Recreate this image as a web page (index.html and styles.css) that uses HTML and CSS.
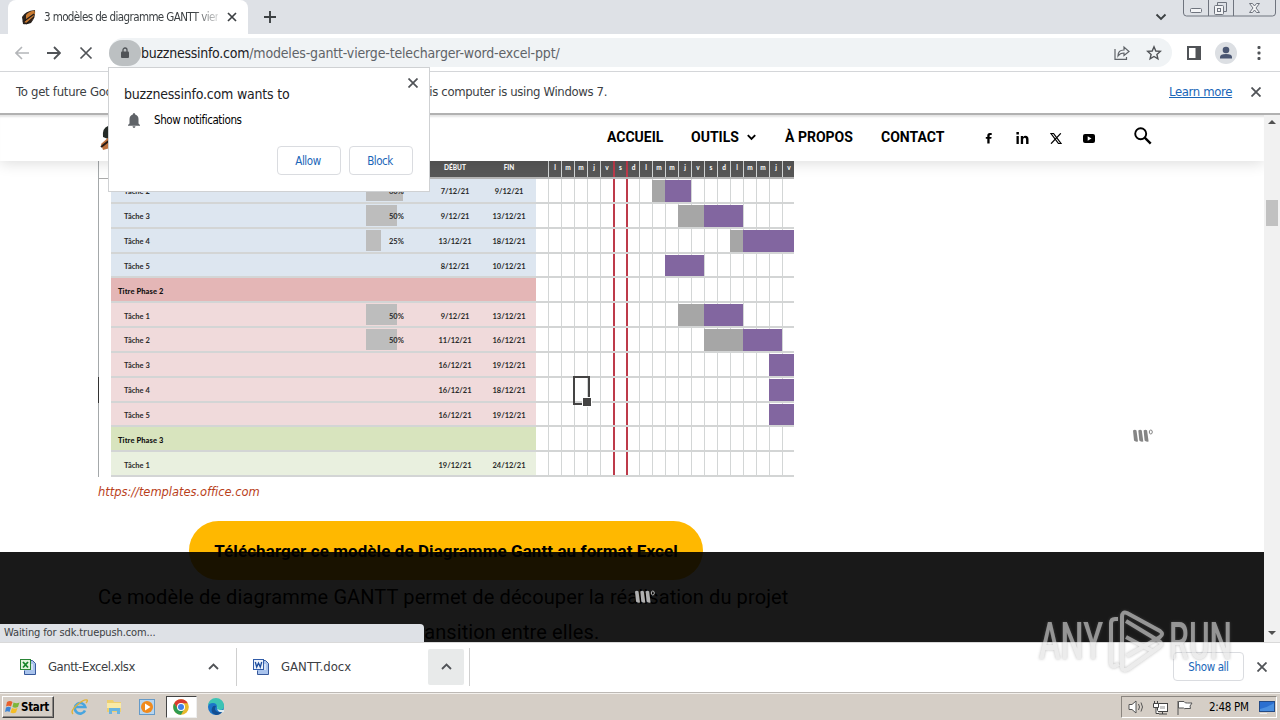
FILE: index.html
```html
<!DOCTYPE html>
<html lang="fr">
<head>
<meta charset="utf-8">
<title>3 modèles de diagramme GANTT vierge</title>
<link rel="stylesheet" href="styles.css">
</head>
<body>
<div class="desktop">
  <div class="tabstrip">
    <div class="tab">
      <svg class="favicon" width="16" height="16" viewBox="0 0 16 16"><path d="M1 8Q4 2 14 1q1 7-4 13-5 2-8 1z" fill="#29221d"/><path d="M5 6Q8 2 13.500 1.500L14 5l-9 7zM3 13l10-7-1 4-6 4z" fill="#c97b32"/><path d="M2 13L13 5M5 15l8-7" stroke="#221b18" stroke-width="1.2"/></svg>
      <span class="tab-title">3 modèles de diagramme GANTT vier</span>
      <svg width="10" height="10" viewBox="0 0 10 10"><path d="M1 1l8 8M9 1L1 9" stroke="#3c4043" stroke-width="1.7"/></svg>
    </div>
    <svg class="newtab" width="12" height="12" viewBox="0 0 12 12"><path d="M6 0v12M0 6h12" stroke="#3c4043" stroke-width="1.9"/></svg>
    <svg class="tabsearch" width="12" height="12" viewBox="0 0 12 12"><path d="M1.500 3.500L6 8l4.500-4.500" fill="none" stroke="#3c4043" stroke-width="1.9"/></svg>
    <div class="winctl">
      <svg width="93" height="17" viewBox="0 0 93 17" fill="none" stroke="#6f747e"><path d="M.5 0v13q0 3 3 3h86q3 0 3-3V0M25.500 0v16M50.500 0v16"/><rect x="7.500" y="8.500" width="11" height="4" rx="1" fill="#f3f4f6"/><path d="M34.500 5V2.500h9v9H41" fill="none"/><rect x="31.500" y="5.500" width="9" height="9" rx="1" fill="#f3f4f6"/><rect x="34.500" y="8.500" width="3" height="3"/><path d="M66.500 3.500h3l2 2.500 2-2.500h3L73 8l3.500 4.500h-3l-2-2.500-2 2.500h-3L70 8z" fill="#f3f4f6"/></svg>
    </div>
  </div>

  <div class="toolbar">
    <svg class="nav" width="14" height="14" viewBox="0 0 14 14"><path d="M14 7H1M7 1L1 7l6 6" fill="none" stroke="#b4b6b9" stroke-width="1.6"/></svg>
    <svg class="nav" width="14" height="14" viewBox="0 0 14 14"><path d="M0 7h13M7 1l6 6-6 6" fill="none" stroke="#505357" stroke-width="1.800"/></svg>
    <svg class="nav" width="14" height="14" viewBox="0 0 14 14"><path d="M1.500 1.500l11 11M12.500 1.500l-11 11" stroke="#505357" stroke-width="1.700"/></svg>
    <div class="omnibox">
      <div class="lock"><svg width="10" height="12" viewBox="0 0 10 12"><rect x="1" y="4.500" width="8" height="6.500" rx="1" fill="#505357"/><path d="M3 5V3a2 2 0 0 1 4 0v2" fill="none" stroke="#505357" stroke-width="1.300"/></svg></div>
      <span class="url"><b>buzznessinfo.com</b>/modeles-gantt-vierge-telecharger-word-excel-ppt/</span>
      <svg class="share" width="16" height="16" viewBox="0 0 16 16" fill="none" stroke="#5f6368" stroke-width="1.200"><path d="M1 4v10.300h11.500V12"/><path d="M4 11q0-6 6-6V2l5 4.500-5 4V8Q6 8 4 11z"/></svg>
      <svg class="star" width="16" height="16" viewBox="0 0 16 16"><path d="M8 1.800l1.800 4.200 4.500.4-3.400 3 1 4.400L8 11.500l-3.900 2.300 1-4.400-3.400-3 4.500-.4z" fill="none" stroke="#505357" stroke-width="1.400"/></svg>
    </div>
    <svg class="panel" width="14" height="14" viewBox="0 0 14 14"><rect x="1" y="1" width="12" height="12" fill="none" stroke="#505357" stroke-width="2"/><path d="M8.500 1h5v12h-5z" fill="#505357"/></svg>
    <svg class="avatar" width="22" height="22" viewBox="0 0 22 22"><circle cx="11" cy="11" r="11" fill="#dcdfe3"/><circle cx="11" cy="8" r="3.300" fill="#4a5672"/><path d="M5 16.500v-1.500q0-3 6-3t6 3v1.500z" fill="#4a5672"/></svg>
    <svg class="dots" width="4" height="14" viewBox="0 0 4 14" fill="#505357"><rect x=".5" y="0" width="3" height="3" rx="1"/><rect x=".5" y="5.500" width="3" height="3" rx="1"/><rect x=".5" y="11" width="3" height="3" rx="1"/></svg>
  </div>

  <div class="infobar">
    <span class="info-text">To get future Google Chrome updates, you'll need Windows 10 or later. Th<span class="info-tail">is computer is using Windows 7.</span></span>
    <a class="learn">Learn more</a>
    <svg width="10" height="10" viewBox="0 0 10 10"><path d="M.5.5l9 9M9.500.5l-9 9" stroke="#505357" stroke-width="1.800"/></svg>
  </div>

  <div class="viewport">
    <div class="page">
      <header class="site-header">
        <svg class="logo" width="16" height="28" viewBox="0 0 16 28"><path d="M10 2q-6 2-5 11l5 2z" fill="#242a27"/><path d="M12 12L3 20l2 6 7-2z" fill="#be713d"/><path d="M12 16l-9 7" stroke="#251914" stroke-width="2"/></svg>
        <nav class="menu">
          <span class="m1">ACCUEIL</span>
          <span class="m2">OUTILS</span>
          <svg class="chev" width="9" height="7" viewBox="0 0 9 7"><path d="M.8 1.200l3.700 3.800 3.700-3.800" fill="none" stroke="#000" stroke-width="1.900"/></svg>
          <span class="m3">À PROPOS</span>
          <span class="m4">CONTACT</span>
        </nav>
        <div class="social">
          <svg width="8" height="12" viewBox="0 0 8 12"><path d="M2.300 11.500V6.800H.8V4.900h1.500V3.500Q2.300 1 4.800 1h1.900v1.900H5.500q-.9 0-.9.9v1.100h2l-.3 1.900H4.600v4.700z"/></svg>
          <svg width="13" height="12" viewBox="0 0 13 12"><path d="M.5 4h2.300v8H.5zM.4 0h2.500v2.500H.4zM4.800 4H7v1.200Q7.800 3.800 9.500 3.800 12.500 3.800 12.500 7.300V12h-2.400V7.800q0-2-1.300-2-1.700 0-1.700 2V12H4.800z"/></svg>
          <svg width="12" height="11" viewBox="0 0 12 11" fill="none" stroke="#000"><path d="M1 .5h2.500L11 10.500H8.500z" stroke-width="1.200"/><path d="M10.800.3L1 10.700" stroke-width="1.200"/></svg>
          <svg width="12" height="9" viewBox="0 0 12 9"><rect width="12" height="9" rx="2"/><path d="M4.700 2.200v4.600l3.800-2.300z" fill="#fff"/></svg>
        </div>
        <svg class="search" width="18" height="18" viewBox="0 0 18 18" fill="none" stroke="#000"><circle cx="6.700" cy="6.700" r="5.500" stroke-width="1.900"/><path d="M10.700 10.700l6 6" stroke-width="2.400"/></svg>
      </header>

      <main class="content">
        <section class="gantt">
          <div class="sheet-edge"></div>
          <div class="rows" id="rows"></div>
          <div class="cursor"></div>
        </section>
        <p class="caption">https://templates.office.com</p>
        <div class="cta-wrap"><a class="cta"><span>Télécharger ce modèle de Diagramme Gantt au format Excel</span></a></div>
        <p class="body-text"><span class="line1">Ce modèle de diagramme GANTT permet de découper la réalisation du projet</span><span class="line2">en plusieurs phases avec la bonne transition entre elles.</span></p>
      </main>

      <svg class="wm side" width="22" height="14" viewBox="0 0 22 14"><path d="M1 1.500q2-1.500 3.500 0l1.500 11q-3 .5-4-1zM6.300 1.500q2-1.500 3.500 0l1.500 11q-3 .5-4-1zM11.600 1.500q2-1.500 3.500 0l1.500 11q-3 .5-4-1z" fill="#858585"/><ellipse cx="18.800" cy="3" rx="1.500" ry="2" fill="none" stroke="#858585"/></svg>
      <div class="ad-overlay">
        <svg class="wm" width="22" height="14" viewBox="0 0 22 14"><path d="M1 1.500q2-1.500 3.500 0l1.500 11q-3 .5-4-1zM6.300 1.500q2-1.500 3.500 0l1.500 11q-3 .5-4-1zM11.600 1.500q2-1.500 3.500 0l1.500 11q-3 .5-4-1z" fill="#b0b0b0"/><ellipse cx="18.800" cy="3" rx="1.500" ry="2" fill="none" stroke="#b0b0b0"/></svg>
      </div>
      <div class="status">Waiting for sdk.truepush.com...</div>
    </div>
    <div class="scrollbar">
      <svg width="8" height="4" viewBox="0 0 8 4"><path d="M0 4l4-4 4 4z" fill="#505050"/></svg>
      <div class="thumb"></div>
      <svg class="down" width="8" height="4" viewBox="0 0 8 4"><path d="M0 0l4 4 4-4z" fill="#505050"/></svg>
    </div>
  </div>

  <div class="downloads">
    <div class="dl first">
      <svg width="16" height="16" viewBox="0 0 16 16"><path d="M7.500 1.500h5l3 3v11h-11v-4" fill="#a9c3ec" stroke="#37599b"/><path d="M9 6h4M9 8h4M9 10h4" stroke="#fff"/><rect x=".5" y=".5" width="10" height="10" fill="#e4f3df" stroke="#2a8536"/><path d="M3 3l5 5.500M8 3L3 8.500" stroke="#16842a" stroke-width="1.800"/></svg>
      <span class="dl-name n1">Gantt-Excel.xlsx</span>
      <span class="dl-more"><svg width="11" height="7" viewBox="0 0 11 7"><path d="M1 6l4.500-4.500L10 6" fill="none" stroke="#505357" stroke-width="1.800"/></svg></span>
    </div>
    <div class="dl">
      <svg width="16" height="16" viewBox="0 0 16 16"><path d="M7.500 1.500h5l3 3v11h-11v-4" fill="#a9c3ec" stroke="#37599b"/><path d="M9 6h4M9 8h4M9 10h4" stroke="#fff"/><rect x=".5" y=".5" width="10" height="10" fill="#edf3fc" stroke="#315ca8"/><path d="M2.300 3l1.400 5 1.800-4 1.800 4L8.700 3" fill="none" stroke="#1d4d9e" stroke-width="1.300"/></svg>
      <span class="dl-name n2">GANTT.docx</span>
      <span class="dl-more active"><svg width="11" height="7" viewBox="0 0 11 7"><path d="M1 6l4.500-4.500L10 6" fill="none" stroke="#505357" stroke-width="1.800"/></svg></span>
    </div>
    <a class="showall">Show all</a>
    <svg class="dl-close" width="10" height="10" viewBox="0 0 10 10"><path d="M.5.5l9 9M9.500.5l-9 9" stroke="#505357" stroke-width="1.800"/></svg>
  </div>

  <div class="taskbar">
    <div class="start">
      <svg width="15" height="14" viewBox="0 0 15 14"><path d="M2 2q3-2 5.500 0L6 6.500q-2.500-1.500-5 0z" fill="#e8602c"/><path d="M8.500 2.500q3 1.500 6 0L13 7q-3 1.500-5.500 0z" fill="#7cb63b"/><path d="M1 7.500q2.500-1.500 5 0L4.500 12q-2-1.500-4.500 0z" fill="#3d84d5"/><path d="M7 8q2.500 1.500 5.500 0L11 12.500q-3 1.500-5.500 0z" fill="#f4bd26"/></svg>
      <span>Start</span>
    </div>
    <div class="quick">
      <svg width="18" height="18" viewBox="0 0 18 18"><path d="M14 12.500A5.300 5.300 0 1 1 14.300 9H5" fill="none" stroke="#48a5df" stroke-width="2.600"/><path d="M2 16Q-1 13 6 7T16 2q1 1-1 3" fill="none" stroke="#e2b335" stroke-width="1.400"/></svg>
      <svg width="18" height="18" viewBox="0 0 18 18"><path d="M2 2h6l1 2h7v10H2z" fill="#edcf70"/><path d="M2 5h14v5H2z" fill="#f9eaa6"/><path d="M4 16v-6h11v6h-3v-3H7v3z" fill="#69b4df"/></svg>
      <svg width="18" height="18" viewBox="0 0 18 18"><rect x="1.500" y="1.500" width="15" height="15" fill="#b7d5ef" stroke="#659ac8"/><circle cx="9" cy="9" r="6" fill="#f08a1d"/><path d="M7 5.500v7l5.500-3.500z" fill="#fff"/></svg>
      <span class="active-app"><svg width="16" height="16" viewBox="0 0 16 16"><circle cx="8" cy="8" r="7.800" fill="#e8b92c"/><path d="M1.200 4.200A7.800 7.800 0 0 1 14.800 4.200H8L4.700 10z" fill="#d93a30"/><path d="M1.200 4.200A7.800 7.800 0 0 0 8 15.800l3.300-6H4.700z" fill="#2f9b50"/><circle cx="8" cy="8" r="4" fill="#fff"/><circle cx="8" cy="8" r="3" fill="#4080e8"/></svg></span>
      <svg width="18" height="18" viewBox="0 0 18 18"><circle cx="9" cy="9" r="8" fill="#1c75c9"/><path d="M1 8A8 8 0 0 1 17 8q0 4-4 4-4 0-3-3 0-4-4-4-4 0-5 3z" fill="#3cc3b4"/><path d="M9 8q-3 4 2 6 3 1 5-1-3 4-7 4-6-2-4-7 1-3 4-2z" fill="#134e91"/><path d="M10.500 8.500q-1 3 2.500 3.500h4v2q-5 1-6.500-2z" fill="#dceaf0"/></svg>
    </div>
    <div class="tray">
      <svg width="17" height="14" viewBox="0 0 17 14" fill="#fff" stroke="#555"><path d="M1 4.500h3L8 1v12L4 9.500H1z"/><path d="M10.500 4q2 3 0 6M13 2.500q3 4.500 0 9" fill="none"/></svg>
      <svg width="17" height="15" viewBox="0 0 17 15" fill="#fff" stroke="#444"><rect x="5.500" y="3.500" width="10" height="8"/><rect x="8" y="6" width="5" height="3" fill="#c8c8c8" stroke="none"/><path d="M7 14h8M10.500 12v2" /><path d="M1.500 3.500h5v4h-5zM2.500 1v2.500M5.500 1v2.500M4 8v5.500h3"/></svg>
      <svg width="17" height="15" viewBox="0 0 17 15" fill="#fff" stroke="#555"><path d="M2 1v14"/><path d="M2.500 1.500H8q1 2 3.500 1.500H16l-2 3 .5 2.500H10Q8 9 7.500 8h-5z"/></svg>
      <span class="clock">2:48 PM</span>
      <svg width="16" height="13" viewBox="0 0 16 13"><rect x=".5" y=".5" width="15" height="10" fill="#2a6fd0" stroke="#234a85"/><path d="M1 8Q8 7 15 2v8H1z" fill="#4a8fe0"/><path d="M1 12.500h7" stroke="#eee"/></svg>
    </div>
  </div>

  <div class="prompt">
    <svg class="prompt-x" width="10" height="10" viewBox="0 0 10 10"><path d="M.5.5l9 9M9.500.5l-9 9" stroke="#505357" stroke-width="1.700"/></svg>
    <div class="prompt-title">buzznessinfo.com wants to</div>
    <div class="prompt-row">
      <svg width="14" height="15" viewBox="0 0 14 15"><path d="M7 0q1.200 0 1.200 1.500Q11.500 2.500 11.500 6v4.500L13 12v.8H1V12l1.500-1.500V6q0-3.500 3.300-4.500Q5.800 0 7 0zM5.500 13.300h3Q8.300 15 7 15t-1.500-1.700z" fill="#5f6368"/></svg>
      <span>Show notifications</span>
    </div>
    <div class="prompt-btns"><a>Allow</a><a>Block</a></div>
  </div>

  <svg class="anyrun" width="206" height="74" viewBox="0 0 206 74">
    <g class="anyrun-mark">
      <text x="5" y="55" textLength="64" lengthAdjust="spacingAndGlyphs">ANY</text>
      <text x="135" y="55" textLength="63" lengthAdjust="spacingAndGlyphs">RUN</text>
      <path d="M84 15h-3q-4 0-4 4v40q0 4 4 3l4-2M88 62V13q0-6 5-4l33 18q4 3 0 6L93 52M92 17l33 20q5 3 0 6L94 65q-6 3-6-3M92 33l28 15"/>
    </g>
  </svg>
</div>
<script src="gantt.js"></script>
</body>
</html>
```
FILE: styles.css
```css
* { box-sizing: border-box; }
body { margin: 0; background: #fff; font-family: "DejaVu Sans Condensed", "DejaVu Sans", sans-serif; font-size: 12px; color: #202124; }
svg { display: block; flex: none; }
p { margin: 0; }
.desktop { position: relative; width: 1280px; height: 720px; overflow: hidden; display: flex; flex-direction: column; white-space: nowrap; }

.tabstrip { height: 34px; background: #dee1e6; display: flex; align-items: center; padding-left: 8px; flex: none; }
.tab { width: 240px; height: 34px; background: #fff; border-radius: 8px 8px 0 0; display: flex; align-items: center; padding: 0 11px 0 13px; }
.favicon { margin-right: 7px; }
.tab-title { width: 174px; margin-right: 9px; font-size: 11.500px; letter-spacing: -.6px; color: #3c4043; -webkit-mask-image: linear-gradient(90deg, #000 150px, transparent 180px); }
.newtab { margin-left: 16px; }
.tabsearch { margin-left: auto; margin-right: 16px; }
.winctl { align-self: flex-start; margin-right: 4px; }

.toolbar { height: 38px; background: #fff; border-bottom: 1px solid #d4d6d9; display: flex; align-items: center; padding-left: 15px; flex: none; }
.nav { margin-right: 18px; }
.omnibox { width: 1063px; height: 29px; margin-left: -2px; border-radius: 15px; background: #f0f3f5; display: flex; align-items: center; }
.lock { width: 32px; height: 26px; border-radius: 13px; background: #bcc0c2; display: flex; align-items: center; justify-content: center; }
.url { font-size: 14px; letter-spacing: -.16px; color: #5f6368; }
.url b { font-weight: 400; color: #202124; letter-spacing: -.26px; }
.share { margin-left: auto; margin-right: 16px; }
.star { margin-right: 10px; }
.panel { margin-left: 15px; }
.avatar { margin-left: 14px; }
.dots { margin-left: 20px; }

.infobar { height: 43px; background: #fff; border-bottom: 2px solid #b1b1b1; display: flex; align-items: center; padding: 0 19px 2px 16px; font-size: 13px; color: #3c4043; flex: none; }
.info-text { width: 1153px; letter-spacing: -.27px; }
.info-tail { letter-spacing: -.35px; }
.learn { color: #1a66b8; text-decoration: underline; margin-right: auto; letter-spacing: -.35px; }

.viewport { height: 527px; display: flex; flex: none; }
.page { position: relative; width: 1264px; height: 527px; overflow: hidden; background: #fff; }
.site-header { position: relative; z-index: 1; height: 46px; background: #fff; display: flex; align-items: center; padding-left: 98px; box-shadow: 0 2px 14px rgba(0,0,0,.14), inset 0 3px 2px -1px #e4e4e4; }
.logo { margin-right: 493px; }
.menu { display: flex; align-items: center; font: 700 14px Roboto, sans-serif; color: #000; padding-bottom: 2px; }
.m1 { width: 84px; }
.m2 { width: 56px; }
.m3 { width: 96px; margin-left: 29px; }
.m4 { width: 104px; }
.social { display: flex; align-items: center; gap: 22px; width: 147px; }
.social svg:first-child { margin-right: 1px; }
.social svg:nth-child(3) { margin-left: -1px; margin-right: -1px; }
.search { margin-top: -4px; margin-left: 2px; }

.content { padding-left: 98px; }
.gantt { position: relative; width: 696px; height: 316px; display: flex; font: 700 7.500px Lato, "Open Sans", sans-serif; color: #2a2a2a; }
.sheet-edge { width: 13px; border-left: 1px solid #a4a8aa; background: linear-gradient(#aaa, #aaa) 0 17px / 13px 1px no-repeat; position: relative; }
.sheet-edge::before { content: ""; position: absolute; left: -1px; top: 216px; width: 1px; height: 26px; background: #333; }
.rows { width: 683px; }
.g-row { display: grid; grid-template-columns: 255px 62px 54px 54px 12px 246px; height: 24.850px; border-bottom: 2px solid #d3d5d5; align-items: stretch; }
.g-row > * { display: flex; align-items: center; background: var(--tone); }
.g-row > .name, .g-row > .date { padding-top: 3px; }
.g-row > .gap, .g-row > .days { background: none; }
.g-row.head { height: 18px; background: #575757; color: #fff; border-bottom-color: #b5b5b5; font-size: 6.500px; font-weight: 900; }
.g-row.head > .date { padding: 0 0 3px; }
.g-row.head i { padding-bottom: 4px; }
.blue { --tone: #dde6f0; }
.rose { --tone: #f0dadb; }
.red { --tone: #e4b6b6; font-weight: 900; color: #111; }
.green { --tone: #d8e4be; font-weight: 900; color: #111; }
.mint { --tone: #e9f0df; }
.g-row .name { padding-left: 13px; }
.g-row.red .name, .g-row.green .name { padding-left: 7px; letter-spacing: .1px; }
.g-row .pct { display: grid; justify-items: start; }
.pct i { grid-area: 1 / 1; align-self: stretch; margin: 1px 0; background: #bdbdbd; }
.pct span { grid-area: 1 / 1; margin-left: 23px; padding-top: 3px; }
.g-row .date { justify-content: center; }
.g-row .days { display: grid; grid-template-columns: repeat(19, 13px); align-items: stretch; overflow: hidden; }
.days i { grid-row: 1; border-left: 1px solid #d3d6d6; display: flex; justify-content: center; align-items: center; font-style: normal; }
.days i.wk { border-left: 2px solid #bd3a4a; }
.days u { grid-row: 1; z-index: 1; margin: 1px 0 0; }
.days .done { background: #a6a6a6; }
.days .todo { background: #8266a0; }
.cursor { position: absolute; left: 475px; top: 215px; width: 17px; height: 29px; border: 2px solid #444; }
.cursor::after { content: ""; position: absolute; right: -4px; bottom: -4px; width: 8px; height: 8px; background: #444; border: 1px solid #fff; }

.caption { height: 30px; font: italic 11.500px/30px "DejaVu Sans", sans-serif; letter-spacing: -.04px; color: #b93f1b; }
.cta-wrap { width: 696px; height: 73px; padding-top: 14px; display: flex; justify-content: center; }
.cta { width: 514px; height: 59px; border-radius: 30px; background: #ffb800; display: flex; align-items: center; justify-content: center; font: 700 17px Roboto, sans-serif; letter-spacing: .08px; color: #000; }
.body-text { font: 400 20px/35px Roboto, sans-serif; letter-spacing: .11px; color: #000; }
.body-text span { display: block; }
.line2 { width: max-content; }
.side { position: absolute; left: 1132px; top: 314px; }
.ad-overlay { position: absolute; left: 0; right: 0; bottom: 0; height: 90px; background: rgba(0,0,0,.9); display: flex; align-items: center; justify-content: center; padding-left: 26px; }
.status { position: absolute; left: 0; bottom: 0; width: 424px; height: 18px; line-height: 18px; padding-left: 4px; background: #dee1e6; border-top-right-radius: 4px; font-size: 11px; letter-spacing: -.12px; color: #3c4043; }
.scrollbar { width: 16px; background: #f1f1f1; display: flex; flex-direction: column; align-items: center; padding: 5px 0 7px; }
.thumb { width: 12px; height: 26px; margin-top: 76px; background: #c1c1c1; }
.down { margin-top: auto; }

.downloads { height: 50px; border-top: 1px solid #d9d9d9; background: #fff; display: flex; align-items: center; padding: 0 13px 2px 0; flex: none; }
.dl { width: 233px; height: 38px; display: flex; align-items: center; padding-left: 16px; border-right: 1px solid #cfcfcf; font-size: 13px; color: #3c4043; }
.dl.first { width: 237px; padding-left: 20px; }
.dl-name { margin-left: 12px; letter-spacing: -.5px; }
.n2 { letter-spacing: .03px; }
.dl-more { width: 36px; height: 36px; margin-left: auto; margin-right: 5px; display: flex; align-items: center; justify-content: center; border-radius: 2px; }
.dl-more.active { background: #e8eaea; }
.showall { width: 71px; height: 29px; margin-left: auto; margin-right: 13px; border: 1px solid #dadce0; border-radius: 4px; color: #1a66b8; display: flex; align-items: center; justify-content: center; font-size: 11.500px; letter-spacing: -.38px; }

.taskbar { height: 28px; background: #d5cec6; border-top: 1px solid #bdb9b5; box-shadow: inset 0 1px #f3f0ec; display: flex; align-items: center; padding: 1px 3px 0 2px; flex: none; }
.start { width: 52px; height: 22px; border: 1px solid; border-color: #fff #444 #444 #fff; box-shadow: inset -1px -1px #8b8783; display: flex; align-items: center; gap: 1px; padding-left: 2px; font-size: 11.500px; font-weight: 700; color: #000; letter-spacing: -.3px; }
.quick { display: flex; align-items: center; margin-left: 17px; gap: 15.500px; }
.active-app { width: 31px; height: 22px; background: #fff; border: 1px solid; border-color: #444 #eee #eee #444; display: flex; align-items: center; justify-content: center; margin: 0 -5px 0 -6px; }
.tray { margin-left: auto; width: 156px; height: 22px; border: 1px solid; border-color: #8a857f #fff #fff #8a857f; display: flex; align-items: center; padding-left: 6px; gap: 7px; }
.clock { font-size: 11.500px; color: #000; letter-spacing: -.3px; margin: 0 3px 0 9px; }

.prompt { position: absolute; left: 108px; top: 67px; width: 322px; height: 125px; z-index: 5; background: #fff; border: 1px solid #cfd1d3; padding: 17px 16px 16px 15px; }
.prompt-x { position: absolute; left: 299px; top: 10px; }
.prompt-title { font-size: 14px; line-height: 18px; letter-spacing: -.2px; }
.prompt-row { display: flex; align-items: center; gap: 13px; height: 34px; padding-left: 3px; font-size: 11.500px; color: #000; letter-spacing: -.4px; }
.prompt-btns { display: flex; justify-content: flex-end; gap: 8px; margin-top: 9px; }
.prompt-btns a { width: 64px; height: 29px; border: 1px solid #dadce0; border-radius: 4px; display: flex; align-items: center; justify-content: center; color: #1a66b8; font-size: 11.500px; letter-spacing: -.45px; padding-right: 2px; }

.anyrun { position: absolute; left: 1034px; top: 604px; z-index: 6; pointer-events: none; }
.anyrun-mark { opacity: .62; filter: drop-shadow(0 0 1.500px rgba(110,110,110,.7)); }
.anyrun text { font: 500 51px Roboto, sans-serif; fill: #e2e2e2; }
.anyrun path { fill: none; stroke: #e2e2e2; stroke-width: 4; stroke-linejoin: round; }
```
FILE: gantt.js
```js
// tone, label, percent, start, end, bars as [kind, first column, column count]
const tasks = [
  ["blue", "Tâche 2", 60, "7/12/21", "9/12/21", [["done", 9, 1], ["todo", 10, 2]]],
  ["blue", "Tâche 3", 50, "9/12/21", "13/12/21", [["done", 11, 2], ["todo", 13, 3]]],
  ["blue", "Tâche 4", 25, "13/12/21", "18/12/21", [["done", 15, 1], ["todo", 16, 4]]],
  ["blue", "Tâche 5", 0, "8/12/21", "10/12/21", [["todo", 10, 3]]],
  ["red", "Titre Phase 2", 0, "", "", []],
  ["rose", "Tâche 1", 50, "9/12/21", "13/12/21", [["done", 11, 2], ["todo", 13, 3]]],
  ["rose", "Tâche 2", 50, "11/12/21", "16/12/21", [["done", 13, 3], ["todo", 16, 3]]],
  ["rose", "Tâche 3", 0, "16/12/21", "19/12/21", [["todo", 18, 2]]],
  ["rose", "Tâche 4", 0, "16/12/21", "18/12/21", [["todo", 18, 2]]],
  ["rose", "Tâche 5", 0, "16/12/21", "19/12/21", [["todo", 18, 2]]],
  ["green", "Titre Phase 3", 0, "", "", []],
  ["mint", "Tâche 1", 0, "19/12/21", "24/12/21", []],
];
const letters = [..."lmmjvsdlmmjvsdlmmjv"];

function dayCells(withLetters) {
  return letters.map((l, n) =>
    `<i class="${n === 5 || n === 6 ? "wk" : ""}" style="grid-column:${n + 1}">${withLetters ? l : ""}</i>`).join("");
}

function row(cls, name, pct, start, end, days) {
  const progress = pct ? `<i style="width:${pct * 0.616}px"></i><span>${pct}%</span>` : "";
  return `<div class="g-row ${cls}"><div class="name">${name}</div><div class="pct">${progress}</div>` +
    `<div class="date">${start}</div><div class="date">${end}</div><div class="gap"></div><div class="days">${days}</div></div>`;
}

document.getElementById("rows").innerHTML =
  row("head", "", 0, "DÉBUT", "FIN", dayCells(true)) +
  tasks.map(([tone, name, pct, s, e, bars]) =>
    row(tone, name, pct, s, e, dayCells(false) +
      bars.map(([kind, col, span]) => `<u class="${kind}" style="grid-column:${col} / span ${span}"></u>`).join(""))).join("");
```
